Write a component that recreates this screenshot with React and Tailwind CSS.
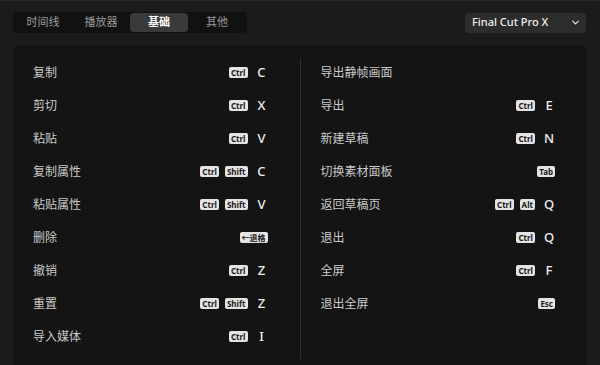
import { ChevronDown } from "lucide-react";

const tabs = ["时间线", "播放器", "基础", "其他"];

const left = [
  { label: "复制", keys: ["Ctrl"], letter: "C" },
  { label: "剪切", keys: ["Ctrl"], letter: "X" },
  { label: "粘贴", keys: ["Ctrl"], letter: "V" },
  { label: "复制属性", keys: ["Ctrl", "Shift"], letter: "C" },
  { label: "粘贴属性", keys: ["Ctrl", "Shift"], letter: "V" },
  { label: "删除", keys: ["←退格"] },
  { label: "撤销", keys: ["Ctrl"], letter: "Z" },
  { label: "重置", keys: ["Ctrl", "Shift"], letter: "Z" },
  { label: "导入媒体", keys: ["Ctrl"], letter: "I" },
];

const right = [
  { label: "导出静帧画面", keys: [] },
  { label: "导出", keys: ["Ctrl"], letter: "E" },
  { label: "新建草稿", keys: ["Ctrl"], letter: "N" },
  { label: "切换素材面板", keys: ["Tab"] },
  { label: "返回草稿页", keys: ["Ctrl", "Alt"], letter: "Q" },
  { label: "退出", keys: ["Ctrl"], letter: "Q" },
  { label: "全屏", keys: ["Ctrl"], letter: "F" },
  { label: "退出全屏", keys: ["Esc"] },
];

const font = { fontFamily: '"Noto Sans", "Noto Sans CJK SC", sans-serif' };

function Key({ k }) {
  return (
    <span className="flex h-[11px] items-center rounded-[2px] bg-[#e4e4e4] px-[2px] text-[8px] font-bold leading-none text-[#1a1a1a]">
      {k}
    </span>
  );
}

function Row({ item }) {
  return (
    <div className="flex h-[33px] items-center justify-between">
      <span className="text-[12px] text-[#c9c9c9]">{item.label}</span>
      <div className="flex items-center">
        <div className="flex items-center gap-[6px]">
          {item.keys.map((k) => (
            <Key key={k} k={k} />
          ))}
        </div>
        {item.letter && (
          <span className="ml-[8px] w-[12px] text-center text-[13px] font-medium text-[#eeeeee]">
            {item.letter}
          </span>
        )}
      </div>
    </div>
  );
}

export default function App() {
  return (
    <div
      className="flex h-[365px] w-[600px] flex-col overflow-hidden border-t border-[#2a2a2a] bg-[#1b1b1b] px-[13px] pt-[11px]"
      style={font}
    >
      {/* Header */}
      <div className="flex h-[21px] items-center justify-between">
        <div className="flex h-[21px] items-center rounded-[4px] bg-[#111111] px-px">
          {tabs.map((t) => (
            <div
              key={t}
              className={`flex h-[19px] w-[58px] items-center justify-center rounded-[4px] text-[11px] ${
                t === "基础" ? "bg-[#3a3a3a] font-bold text-white" : "text-[#9a9a9a]"
              }`}
            >
              {t}
            </div>
          ))}
        </div>
        <div className="mr-px flex h-[20px] w-[121px] items-center justify-between rounded-[4px] bg-[#2c2c2c] pl-[7px] pr-[5px]">
          <span className="text-[11px] font-medium text-[#eeeeee]">Final Cut Pro X</span>
          <ChevronDown size={11} strokeWidth={3} className="text-[#dddddd]" />
        </div>
      </div>

      {/* Panel */}
      <div className="mt-[12px] flex flex-1 rounded-t-[5px] bg-[#141414] pt-[11px]">
        <div className="flex-1 pl-5 pr-8">
          {left.map((item, i) => (
            <Row key={i} item={item} />
          ))}
        </div>
        <div className="mt-[2px] h-[301px] w-px bg-[#2e2e2e]" />
        <div className="flex-1 pl-5 pr-8">
          {right.map((item, i) => (
            <Row key={i} item={item} />
          ))}
        </div>
      </div>
    </div>
  );
}
